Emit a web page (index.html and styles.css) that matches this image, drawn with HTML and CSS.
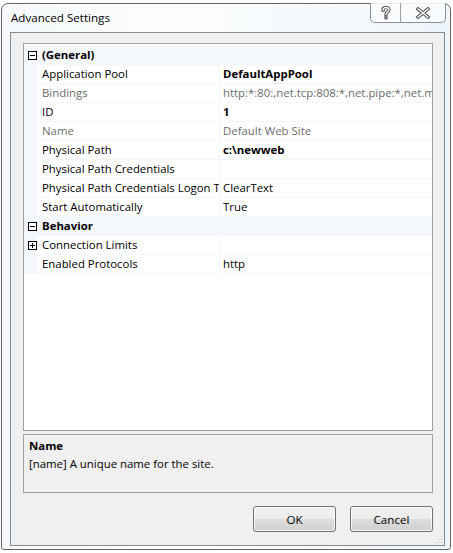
FILE: index.html
```html
<!DOCTYPE html>
<html>
<head>
<meta charset="utf-8">
<link rel="stylesheet" href="styles.css">
</head>
<body>
<div class="window">
  <div class="titlebar">
    <span class="title">Advanced Settings</span>
    <div class="caption-buttons">
      <div class="cap help">
        <svg width="12" height="14" viewBox="0 0 12 14">
          <path d="M3 4.2 C3 2.4 4.4 1.5 6 1.5 C7.8 1.5 9 2.5 9 4 C9 5.6 7.6 6.1 6.6 6.8 C6.1 7.2 6 7.6 6 8.6" fill="none" stroke="#4a4a4a" stroke-width="3.2" stroke-linecap="square"/>
          <rect x="4.4" y="10.3" width="3.2" height="3" fill="#4a4a4a"/>
          <path d="M3 4.2 C3 2.4 4.4 1.5 6 1.5 C7.8 1.5 9 2.5 9 4 C9 5.6 7.6 6.1 6.6 6.8 C6.1 7.2 6 7.6 6 8.6" fill="none" stroke="#ffffff" stroke-width="1.3" stroke-linecap="square"/>
          <rect x="5.4" y="11.3" width="1.2" height="1" fill="#ffffff"/>
        </svg>
      </div>
      <div class="cap close">
        <svg width="16" height="12" viewBox="0 0 16 12">
          <path d="M3 2 L13 10 M13 2 L3 10" stroke="#4a4a4a" stroke-width="3.4" stroke-linecap="square"/>
          <path d="M3 2 L13 10 M13 2 L3 10" stroke="#ffffff" stroke-width="1.5" stroke-linecap="square"/>
        </svg>
      </div>
    </div>
  </div>
  <div class="client">
    <div class="grid">
      <div class="row cat">
        <span class="gutter"><span class="expander minus"></span></span>
        <span class="name">(General)</span>
      </div>
      <div class="row">
        <span class="gutter"></span>
        <span class="name">Application Pool</span>
        <span class="value bold">DefaultAppPool</span>
      </div>
      <div class="row">
        <span class="gutter"></span>
        <span class="name gray">Bindings</span>
        <span class="value gray">http:*:80:,net.tcp:808:*,net.pipe:*,net.msmq:localhost,msmq.formatname:localhost</span>
      </div>
      <div class="row">
        <span class="gutter"></span>
        <span class="name">ID</span>
        <span class="value bold">1</span>
      </div>
      <div class="row">
        <span class="gutter"></span>
        <span class="name gray">Name</span>
        <span class="value gray">Default Web Site</span>
      </div>
      <div class="row">
        <span class="gutter"></span>
        <span class="name">Physical Path</span>
        <span class="value bold">c:\newweb</span>
      </div>
      <div class="row">
        <span class="gutter"></span>
        <span class="name">Physical Path Credentials</span>
        <span class="value"></span>
      </div>
      <div class="row">
        <span class="gutter"></span>
        <span class="name">Physical Path Credentials Logon Type</span>
        <span class="value">ClearText</span>
      </div>
      <div class="row">
        <span class="gutter"></span>
        <span class="name">Start Automatically</span>
        <span class="value">True</span>
      </div>
      <div class="row cat">
        <span class="gutter"><span class="expander minus"></span></span>
        <span class="name">Behavior</span>
      </div>
      <div class="row">
        <span class="gutter"><span class="expander plus"></span></span>
        <span class="name">Connection Limits</span>
        <span class="value"></span>
      </div>
      <div class="row last">
        <span class="gutter"></span>
        <span class="name">Enabled Protocols</span>
        <span class="value">http</span>
      </div>
    </div>
    <div class="desc">
      <div class="desc-title">Name</div>
      <div class="desc-text">[name] A unique name for the site.</div>
    </div>
    <div class="buttons">
      <button class="btn">OK</button>
      <button class="btn">Cancel</button>
    </div>
    <div class="grip"></div>
  </div>
</div>
</body>
</html>
```

FILE: styles.css
```css
html, body {
  margin: 0;
  padding: 0;
  background: #ffffff;
}
body {
  width: 453px;
  height: 553px;
  overflow: hidden;
  font-family: "Open Sans", "Noto Sans", sans-serif;
  font-size: 11.4px;
  color: #000;
}
.window {
  box-sizing: border-box;
  margin: 3px 0 0 1px;
  width: 450px;
  height: 547px;
  border: 1px solid #5e6266;
  border-radius: 7px 7px 3px 3px;
  background: linear-gradient(90deg, #f6f9fb 0%, #fbfdfe 40%, #f4f8fb 80%, #eef5fa 100%);
  box-shadow: inset 0 0 0 1px rgba(255,255,255,0.85);
  display: flex;
  flex-direction: column;
}
.titlebar {
  height: 28px;
  display: flex;
  align-items: flex-start;
  justify-content: space-between;
}
.title {
  margin: 7px 0 0 9px;
  font-size: 11.6px;
  line-height: 14px;
  color: #000;
}
.caption-buttons {
  display: flex;
  margin-right: 4px;
  margin-top: -1px;
  height: 19px;
  border: 1px solid #8a9098;
  border-top: none;
  border-radius: 0 0 5px 5px;
  background: rgba(255,255,255,0.55);
  box-shadow: inset 0 0 0 1px rgba(255,255,255,0.7);
}
.cap {
  display: flex;
  align-items: center;
  justify-content: center;
}
.help {
  width: 29px;
  border-right: 1px solid #9aa0a7;
}
.close {
  width: 44px;
}
.client {
  box-sizing: border-box;
  margin-left: 8px;
  width: 435px;
  height: 514px;
  border: 1px solid #858b92;
  background: #f0f0f0;
  display: flex;
  flex-direction: column;
  position: relative;
}
.grid {
  box-sizing: border-box;
  margin: 10px 0 0 12px;
  width: 410px;
  height: 388px;
  border: 1px solid #a0a0a0;
  background: #ffffff;
  padding-top: 1px;
  overflow: hidden;
}
.row {
  display: flex;
  height: 18px;
  border-top: 1px solid #f4f7fc;
  line-height: 18px;
  white-space: nowrap;
}
.row.last {
  border-bottom: 1px solid #f4f7fc;
}
.gutter {
  flex: 0 0 13px;
  background: #f4f7fc;
  display: flex;
  align-items: center;
  justify-content: center;
}
.name {
  flex: 0 0 177px;
  padding-left: 5px;
  overflow: hidden;
  border-right: 1px solid #f4f7fc;
}
.value {
  flex: 1 1 auto;
  padding-left: 3px;
  overflow: hidden;
  min-width: 0;
}
.cat {
  background: #f4f7fc;
}
.cat .name {
  font-weight: bold;
  border-right: none;
  flex: 1 1 auto;
}
.bold {
  font-weight: bold;
}
.gray {
  color: #6d6d6d;
}
.expander {
  box-sizing: border-box;
  width: 9px;
  height: 9px;
  border: 1px solid #000;
  background: #fff;
  position: relative;
  margin-left: 3px;
}
.expander::before {
  content: "";
  position: absolute;
  left: 1px;
  top: 3px;
  width: 5px;
  height: 1px;
  background: #000;
}
.expander.plus::after {
  content: "";
  position: absolute;
  left: 3px;
  top: 1px;
  width: 1px;
  height: 5px;
  background: #000;
}
.desc {
  box-sizing: border-box;
  margin: 3px 0 0 12px;
  width: 410px;
  height: 59px;
  border: 1px solid #a0a0a0;
  padding: 2px 5px;
  line-height: 18px;
}
.desc-title {
  font-weight: bold;
}
.buttons {
  display: flex;
  justify-content: flex-end;
  gap: 14px;
  margin-top: 13px;
  padding-right: 11px;
}
.btn {
  box-sizing: border-box;
  width: 83px;
  height: 26px;
  border: 1px solid #707070;
  border-radius: 3px;
  background: linear-gradient(180deg, #f2f2f2 0%, #ebebeb 48%, #dddddd 52%, #cfcfcf 100%);
  box-shadow: inset 0 0 0 1px rgba(255,255,255,0.8);
  font-family: "Open Sans", "Noto Sans", sans-serif;
  font-size: 11.6px;
  color: #000;
  padding: 0;
}
.grip {
  position: absolute;
  right: 2px;
  bottom: 2px;
  width: 8px;
  height: 8px;
  background:
    radial-gradient(circle, #b8b8b8 0.8px, transparent 1px) 0 0 / 3px 3px;
  clip-path: polygon(100% 0, 100% 100%, 0 100%);
}
```
